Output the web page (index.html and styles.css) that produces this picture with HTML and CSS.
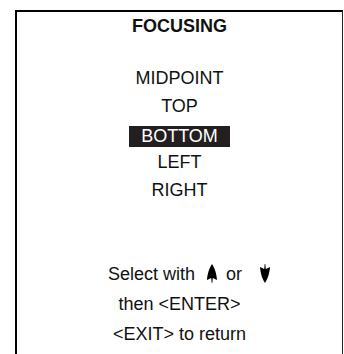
FILE: index.html
```html
<!DOCTYPE html>
<html>
<head>
<meta charset="utf-8">
<link rel="stylesheet" href="styles.css">
</head>
<body>
<div class="panel">
  <div class="title">FOCUSING</div>
  <div class="menu">
    <div class="item">MIDPOINT</div>
    <div class="item">TOP</div>
    <div class="item"><span class="sel">BOTTOM</span></div>
    <div class="item">LEFT</div>
    <div class="item">RIGHT</div>
  </div>
  <div class="help">
    <div class="line select">Select with <svg class="arrow up" width="10" height="19" viewBox="0 0 10 19"><path d="M5 0 C7.6 3.5 9.6 10 10 16 L5.8 14 L5.3 19 L4.7 19 L4.2 14 L0 16 C0.4 10 2.4 3.5 5 0 Z" fill="#000"/></svg> <span class="or">or</span> <svg class="arrow down" width="10" height="19" viewBox="0 0 10 19"><path d="M5 19 C7.6 15.5 9.6 9 10 3 L5.8 5 L5.3 0 L4.7 0 L4.2 5 L0 3 C0.4 9 2.4 15.5 5 19 Z" fill="#000"/></svg></div>
    <div class="line">then &lt;ENTER&gt;</div>
    <div class="line">&lt;EXIT&gt; to return</div>
  </div>
</div>
</body>
</html>
```

FILE: styles.css
```css
html, body {
  margin: 0;
  padding: 0;
  background: #fff;
}
body {
  font-family: "Liberation Sans", Arial, sans-serif;
  color: #111;
  overflow: hidden;
  height: 354px;
}
.panel {
  margin: 10px 0 0 15px;
  width: 325px;
  height: 400px;
  border-left: 2px solid #000;
  border-top: 2px solid #000;
  border-right: 1px solid #222;
  text-align: center;
  font-size: 18px;
}
.title {
  font-weight: bold;
  line-height: 28px;
}
.menu {
  margin-top: 24px;
}
.item {
  line-height: 28px;
  height: 28px;
  display: flex;
  justify-content: center;
}
.sel {
  display: block;
  background: #231f20;
  color: #fff;
  height: 21px;
  line-height: 21px;
  padding: 0 12px;
  margin-top: 6px;
}
.help {
  margin-top: 55px;
}
.line {
  line-height: 30px;
  height: 30px;
}
.select {
  padding-left: 19px;
}
.arrow {
  vertical-align: -3px;
}
.up {
  margin: 0 4px 0 7px;
}
.or {
  margin-right: 13px;
}
```
